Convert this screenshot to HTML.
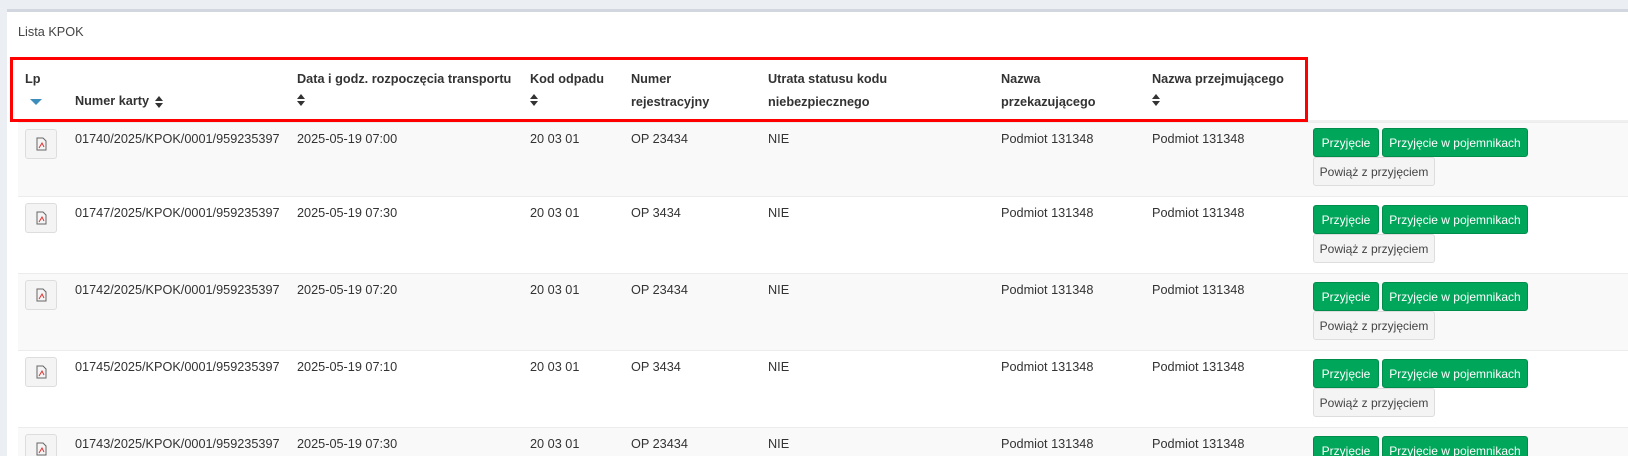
<!DOCTYPE html>
<html style="width:1628px;height:456px;overflow:hidden"><head><meta charset="utf-8"><style>
*{box-sizing:border-box;margin:0;padding:0}
body{width:1628px;height:456px;overflow:hidden;background:#ebeef3;font-family:"Liberation Sans",sans-serif;font-size:12.7px;color:#333;position:relative}
.panel{position:absolute;left:7px;top:9px;width:1621px;height:447px;background:#fff;border-top:3px solid #d2d6de}
.title{position:absolute;left:18px;top:25px;color:#444}
.hdr{position:absolute;left:18px;top:59px;width:1610px;height:63px;border-bottom:2px solid #f0f0f0}
.h{position:absolute;font-weight:bold;color:#333;line-height:23px;white-space:nowrap}
.red{position:absolute;left:10px;top:57px;width:1298px;height:65px;border:3px solid #f00}
.row{position:absolute;left:18px;width:1610px;height:77px;border-top:1px solid #ececec;overflow:hidden}
.row.g{background:#f9f9f9}
.c{position:absolute;top:7px;line-height:19px;white-space:nowrap}
.ic{position:absolute;left:7px;top:6px;width:32px;height:30px;border:1px solid #ddd;border-radius:3px;background:#f4f4f4}
.b{position:absolute;height:29px;line-height:28px;border-radius:3px;white-space:nowrap;text-align:center;font-size:12px}
.gr{background:#00a65a;color:#fff;border:1px solid #008d4c}
.gy{background:#f4f4f4;color:#444;border:1px solid #ddd}
.sort{display:inline-block;vertical-align:middle;margin-left:6px}
</style></head><body>
<div class="panel"></div>
<div class="title">Lista KPOK</div>
<div class="hdr">
<div class="h" style="left:7px;top:9px">Lp<br><svg width="12" height="8" style="margin-left:5px"><path d="M0 1h12L6 7z" fill="#3c8dbc"/></svg></div>
<div class="h" style="left:57px;top:31px">Numer karty<svg class="sort" width="8" height="12"><path d="M0 5h8L4 0zM0 7h8L4 12z" fill="#333"/></svg></div>
<div class="h" style="left:279px;top:9px">Data i godz. rozpoczęcia transportu<br><svg width="8" height="12"><path d="M0 5h8L4 0zM0 7h8L4 12z" fill="#333"/></svg></div>
<div class="h" style="left:512px;top:9px">Kod odpadu<br><svg width="8" height="12"><path d="M0 5h8L4 0zM0 7h8L4 12z" fill="#333"/></svg></div>
<div class="h" style="left:613px;top:9px">Numer<br>rejestracyjny</div>
<div class="h" style="left:750px;top:9px">Utrata statusu kodu<br>niebezpiecznego</div>
<div class="h" style="left:983px;top:9px">Nazwa<br>przekazującego</div>
<div class="h" style="left:1134px;top:9px">Nazwa przejmującego<br><svg width="8" height="12"><path d="M0 5h8L4 0zM0 7h8L4 12z" fill="#333"/></svg></div>
</div>
<div class="red"></div>

<div class="row g" style="top:122px;height:74px">
<div class="ic"><svg width="30" height="28"><path d="M11 8h6l3 3v9h-9z" fill="none" stroke="#666"/><path d="M13 18l3-5 2 4" fill="none" stroke="#d33"/></svg></div>
<div class="c" style="left:57px">01740/2025/KPOK/0001/959235397</div><div class="c" style="left:279px">2025-05-19 07:00</div><div class="c" style="left:512px">20 03 01</div><div class="c" style="left:613px">OP 23434</div><div class="c" style="left:750px">NIE</div><div class="c" style="left:983px">Podmiot 131348</div><div class="c" style="left:1134px">Podmiot 131348</div>
<div class="b gr" style="left:1295px;top:5px;width:66px">Przyjęcie</div><div class="b gr" style="left:1364px;top:5px;width:146px">Przyjęcie w pojemnikach</div><div class="b gy" style="left:1295px;top:34px;width:122px">Powiąż z przyjęciem</div>
</div>
<div class="row" style="top:196px">
<div class="ic"><svg width="30" height="28"><path d="M11 8h6l3 3v9h-9z" fill="none" stroke="#666"/><path d="M13 18l3-5 2 4" fill="none" stroke="#d33"/></svg></div>
<div class="c" style="left:57px">01747/2025/KPOK/0001/959235397</div><div class="c" style="left:279px">2025-05-19 07:30</div><div class="c" style="left:512px">20 03 01</div><div class="c" style="left:613px">OP 3434</div><div class="c" style="left:750px">NIE</div><div class="c" style="left:983px">Podmiot 131348</div><div class="c" style="left:1134px">Podmiot 131348</div>
<div class="b gr" style="left:1295px;top:8px;width:66px">Przyjęcie</div><div class="b gr" style="left:1364px;top:8px;width:146px">Przyjęcie w pojemnikach</div><div class="b gy" style="left:1295px;top:37px;width:122px">Powiąż z przyjęciem</div>
</div>
<div class="row g" style="top:273px">
<div class="ic"><svg width="30" height="28"><path d="M11 8h6l3 3v9h-9z" fill="none" stroke="#666"/><path d="M13 18l3-5 2 4" fill="none" stroke="#d33"/></svg></div>
<div class="c" style="left:57px">01742/2025/KPOK/0001/959235397</div><div class="c" style="left:279px">2025-05-19 07:20</div><div class="c" style="left:512px">20 03 01</div><div class="c" style="left:613px">OP 23434</div><div class="c" style="left:750px">NIE</div><div class="c" style="left:983px">Podmiot 131348</div><div class="c" style="left:1134px">Podmiot 131348</div>
<div class="b gr" style="left:1295px;top:8px;width:66px">Przyjęcie</div><div class="b gr" style="left:1364px;top:8px;width:146px">Przyjęcie w pojemnikach</div><div class="b gy" style="left:1295px;top:37px;width:122px">Powiąż z przyjęciem</div>
</div>
<div class="row" style="top:350px">
<div class="ic"><svg width="30" height="28"><path d="M11 8h6l3 3v9h-9z" fill="none" stroke="#666"/><path d="M13 18l3-5 2 4" fill="none" stroke="#d33"/></svg></div>
<div class="c" style="left:57px">01745/2025/KPOK/0001/959235397</div><div class="c" style="left:279px">2025-05-19 07:10</div><div class="c" style="left:512px">20 03 01</div><div class="c" style="left:613px">OP 3434</div><div class="c" style="left:750px">NIE</div><div class="c" style="left:983px">Podmiot 131348</div><div class="c" style="left:1134px">Podmiot 131348</div>
<div class="b gr" style="left:1295px;top:8px;width:66px">Przyjęcie</div><div class="b gr" style="left:1364px;top:8px;width:146px">Przyjęcie w pojemnikach</div><div class="b gy" style="left:1295px;top:37px;width:122px">Powiąż z przyjęciem</div>
</div>
<div class="row g" style="top:427px;height:29px">
<div class="ic"><svg width="30" height="28"><path d="M11 8h6l3 3v9h-9z" fill="none" stroke="#666"/><path d="M13 18l3-5 2 4" fill="none" stroke="#d33"/></svg></div>
<div class="c" style="left:57px">01743/2025/KPOK/0001/959235397</div><div class="c" style="left:279px">2025-05-19 07:30</div><div class="c" style="left:512px">20 03 01</div><div class="c" style="left:613px">OP 23434</div><div class="c" style="left:750px">NIE</div><div class="c" style="left:983px">Podmiot 131348</div><div class="c" style="left:1134px">Podmiot 131348</div>
<div class="b gr" style="left:1295px;top:8px;width:66px">Przyjęcie</div><div class="b gr" style="left:1364px;top:8px;width:146px">Przyjęcie w pojemnikach</div>
</div>
</body></html>
